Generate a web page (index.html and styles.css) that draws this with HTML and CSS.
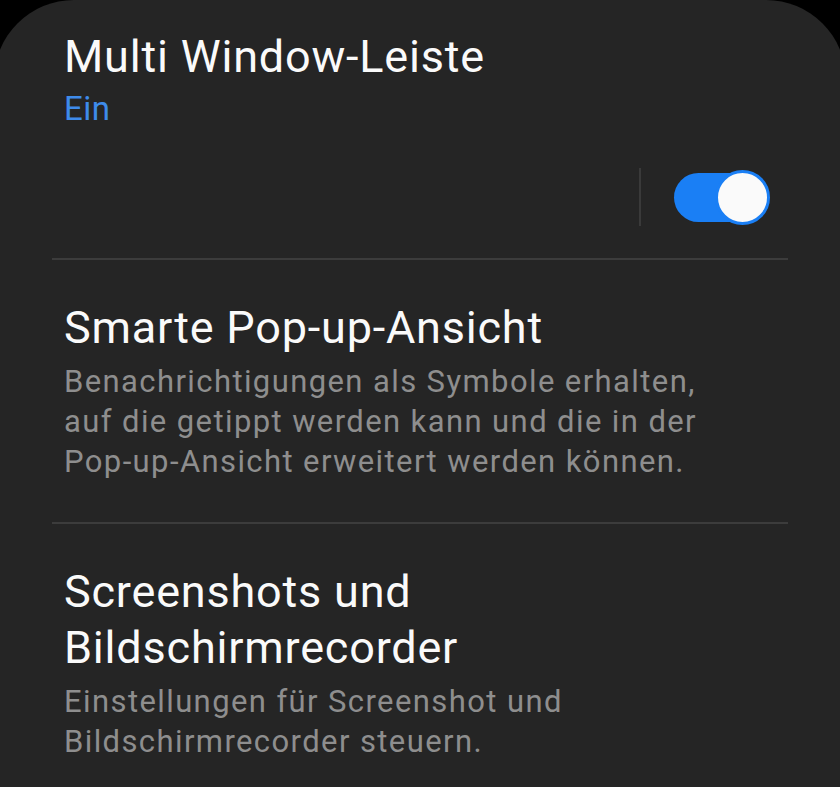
FILE: index.html
```html
<!DOCTYPE html>
<html lang="de">
<head>
  <meta charset="UTF-8">
  <title>Erweiterte Funktionen</title>
  <link rel="stylesheet" href="styles.css">
</head>
<body>
  <div class="panel">
    <!-- Multi Window -->
    <div class="item item-switch">
      <div class="item-title">Multi Window-Leiste</div>
      <div class="item-state">Ein</div>
      <div class="switch-row">
        <span class="switch-divider"></span>
        <span class="switch on"><span class="knob"></span></span>
      </div>
    </div>

    <div class="item">
      <div class="item-title">Smarte Pop-up-Ansicht</div>
      <div class="item-desc">Benachrichtigungen als Symbole erhalten,<br>auf die getippt werden kann und die in der<br>Pop-up-Ansicht erweitert werden können.</div>
    </div>

    <div class="item">
      <div class="item-title">Screenshots und<br>Bildschirmrecorder</div>
      <div class="item-desc">Einstellungen für Screenshot und<br>Bildschirmrecorder steuern.</div>
    </div>
  </div>
</body>
</html>
```

FILE: styles.css
```css
:root {
  --panel-bg: #252525;
  --title-color: #fafafa;
  --desc-color: #8e8e8e;
  --accent: #3e8bea;
  --switch-blue: #1a7ff5;
  --line: #3c3c3c;
}

html, body {
  margin: 0;
  padding: 0;
  background: #000;
  height: 100%;
}

body {
  font-family: Roboto, "Noto Sans", sans-serif;
  overflow: hidden;
}

.panel {
  background: var(--panel-bg);
  border-radius: 80px 80px 0 0;
  margin: 0 -6px;
  padding: 0 58px;
  min-height: 100%;
}

.item {
  padding: 40px 0 40px 12px;
  border-bottom: 2px solid var(--line);
}

.item:last-child {
  border-bottom: none;
}

.item-switch {
  padding-top: 29px;
  padding-bottom: 32px;
}

.item-title {
  color: var(--title-color);
  font-size: 45px;
  line-height: 56px;
  letter-spacing: 0.8px;
}

.item-state {
  color: var(--accent);
  font-size: 33px;
  line-height: 42px;
  letter-spacing: 0.5px;
  margin-top: 3px;
}

.switch-row {
  display: flex;
  justify-content: flex-end;
  align-items: center;
  gap: 33px;
  margin-top: 38px;
  padding-right: 20px;
}

.switch-divider {
  width: 2px;
  height: 58px;
  background: #3a3a3a;
}

.switch {
  position: relative;
  width: 94px;
  height: 49px;
  border-radius: 25px;
  background: var(--switch-blue);
}

.switch .knob {
  position: absolute;
  right: -2px;
  top: -3px;
  box-sizing: border-box;
  width: 55px;
  height: 55px;
  border-radius: 50%;
  background: #fafafa;
  border: 3px solid var(--switch-blue);
}

.item-desc {
  color: var(--desc-color);
  font-size: 31px;
  line-height: 40px;
  letter-spacing: 1.4px;
  margin-top: 6px;
}
```
